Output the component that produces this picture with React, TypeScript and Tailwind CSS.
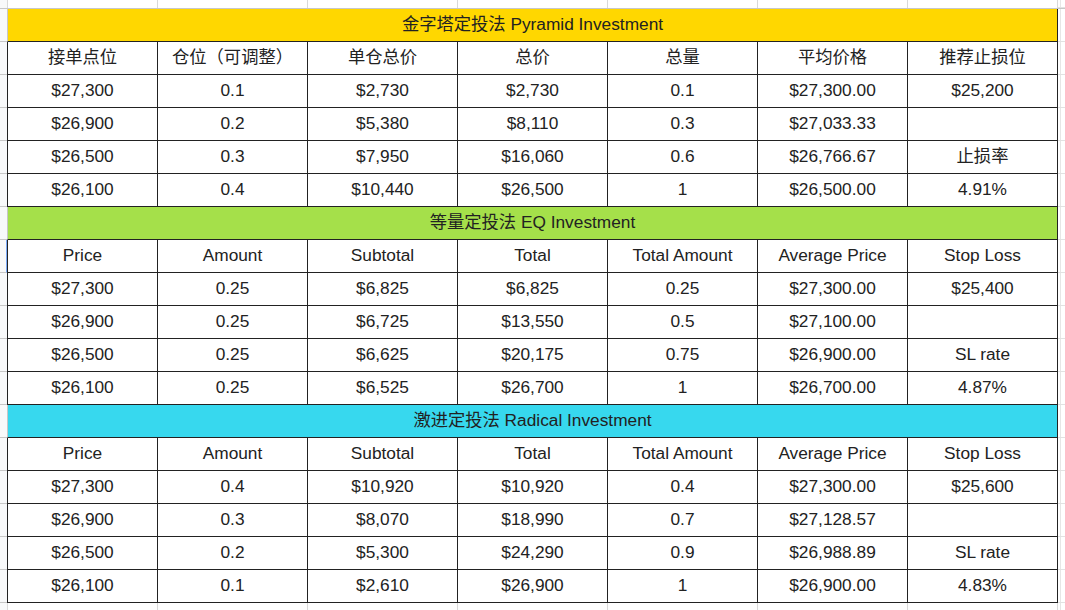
import React from "react";

type Section = {
  title: string;
  bg: string;
  header: string[];
  rows: string[][];
};

const sections: Section[] = [
  {
    title: "金字塔定投法 Pyramid Investment",
    bg: "bg-[#ffd700]",
    header: ["接单点位", "仓位（可调整）", "单仓总价", "总价", "总量", "平均价格", "推荐止损位"],
    rows: [
      ["$27,300", "0.1", "$2,730", "$2,730", "0.1", "$27,300.00", "$25,200"],
      ["$26,900", "0.2", "$5,380", "$8,110", "0.3", "$27,033.33", ""],
      ["$26,500", "0.3", "$7,950", "$16,060", "0.6", "$26,766.67", "止损率"],
      ["$26,100", "0.4", "$10,440", "$26,500", "1", "$26,500.00", "4.91%"],
    ],
  },
  {
    title: "等量定投法 EQ Investment",
    bg: "bg-[#a5e04a]",
    header: ["Price", "Amount", "Subtotal", "Total", "Total Amount", "Average Price", "Stop Loss"],
    rows: [
      ["$27,300", "0.25", "$6,825", "$6,825", "0.25", "$27,300.00", "$25,400"],
      ["$26,900", "0.25", "$6,725", "$13,550", "0.5", "$27,100.00", ""],
      ["$26,500", "0.25", "$6,625", "$20,175", "0.75", "$26,900.00", "SL rate"],
      ["$26,100", "0.25", "$6,525", "$26,700", "1", "$26,700.00", "4.87%"],
    ],
  },
  {
    title: "激进定投法 Radical Investment",
    bg: "bg-[#37d8ee]",
    header: ["Price", "Amount", "Subtotal", "Total", "Total Amount", "Average Price", "Stop Loss"],
    rows: [
      ["$27,300", "0.4", "$10,920", "$10,920", "0.4", "$27,300.00", "$25,600"],
      ["$26,900", "0.3", "$8,070", "$18,990", "0.7", "$27,128.57", ""],
      ["$26,500", "0.2", "$5,300", "$24,290", "0.9", "$26,988.89", "SL rate"],
      ["$26,100", "0.1", "$2,610", "$26,900", "1", "$26,900.00", "4.83%"],
    ],
  },
];

function Strip({ selected }: { selected?: boolean }) {
  return (
    <div
      className={
        "w-[7px] shrink-0 bg-[#f8f9fa] border-b border-[#c7c7c7] " +
        (selected ? "border-r border-r-[#7baaf7]" : "")
      }
    />
  );
}

function RightFill() {
  return (
    <div className="flex-1 flex border-b border-[#e2e2e2]">
      <div className="w-[2px]" />
      <div className="w-px bg-[#e6e6e6]" />
    </div>
  );
}

function TitleRow({ s }: { s: Section }) {
  return (
    <div className="flex h-[33px]">
      <Strip />
      <div
        className={
          "w-[1051px] shrink-0 flex items-center justify-center border-l border-l-[#c7c7c7] border-r border-r-[#222] border-b border-b-[#222] " +
          s.bg
        }
      >
        <span className="text-[17.3px] text-[#222] leading-none">{s.title}</span>
      </div>
      <RightFill />
    </div>
  );
}

function DataRow({ cells, selected }: { cells: string[]; selected?: boolean }) {
  return (
    <div className="flex h-[33px]">
      <Strip selected={selected} />
      <div className="w-[1051px] shrink-0 flex border-l border-b border-[#222] bg-white">
        {cells.map((c, i) => (
          <div
            key={i}
            className="w-[150px] shrink-0 flex items-center justify-center border-r border-[#222] text-[17.3px] text-[#222] leading-none whitespace-nowrap"
          >
            {c}
          </div>
        ))}
      </div>
      <RightFill />
    </div>
  );
}

function EdgeRow({ top }: { top?: boolean }) {
  return (
    <div className={"flex " + (top ? "h-[9px] border-b border-[#c7c7c7]" : "h-[20px]")}>
      <div className="w-[7px] shrink-0 bg-[#f8f9fa]" />
      <div className="w-[1051px] shrink-0 flex border-l border-[#d9d9d9]">
        {Array.from({ length: 7 }).map((_, i) => (
          <div key={i} className="w-[150px] shrink-0 border-r border-[#d9d9d9]" />
        ))}
      </div>
      <RightFill />
    </div>
  );
}

export default function App() {
  return (
    <div
      className="w-[1065px] h-[610px] overflow-hidden bg-white"
      style={{ fontFamily: '"Liberation Sans", Arial, "Noto Sans CJK SC", sans-serif' }}
    >
      <EdgeRow top />
      {sections.map((s, si) => (
        <React.Fragment key={si}>
          <TitleRow s={s} />
          <DataRow cells={s.header} selected={si === 1} />
          {s.rows.map((r, ri) => (
            <DataRow key={ri} cells={r} />
          ))}
        </React.Fragment>
      ))}
      <EdgeRow />
    </div>
  );
}
